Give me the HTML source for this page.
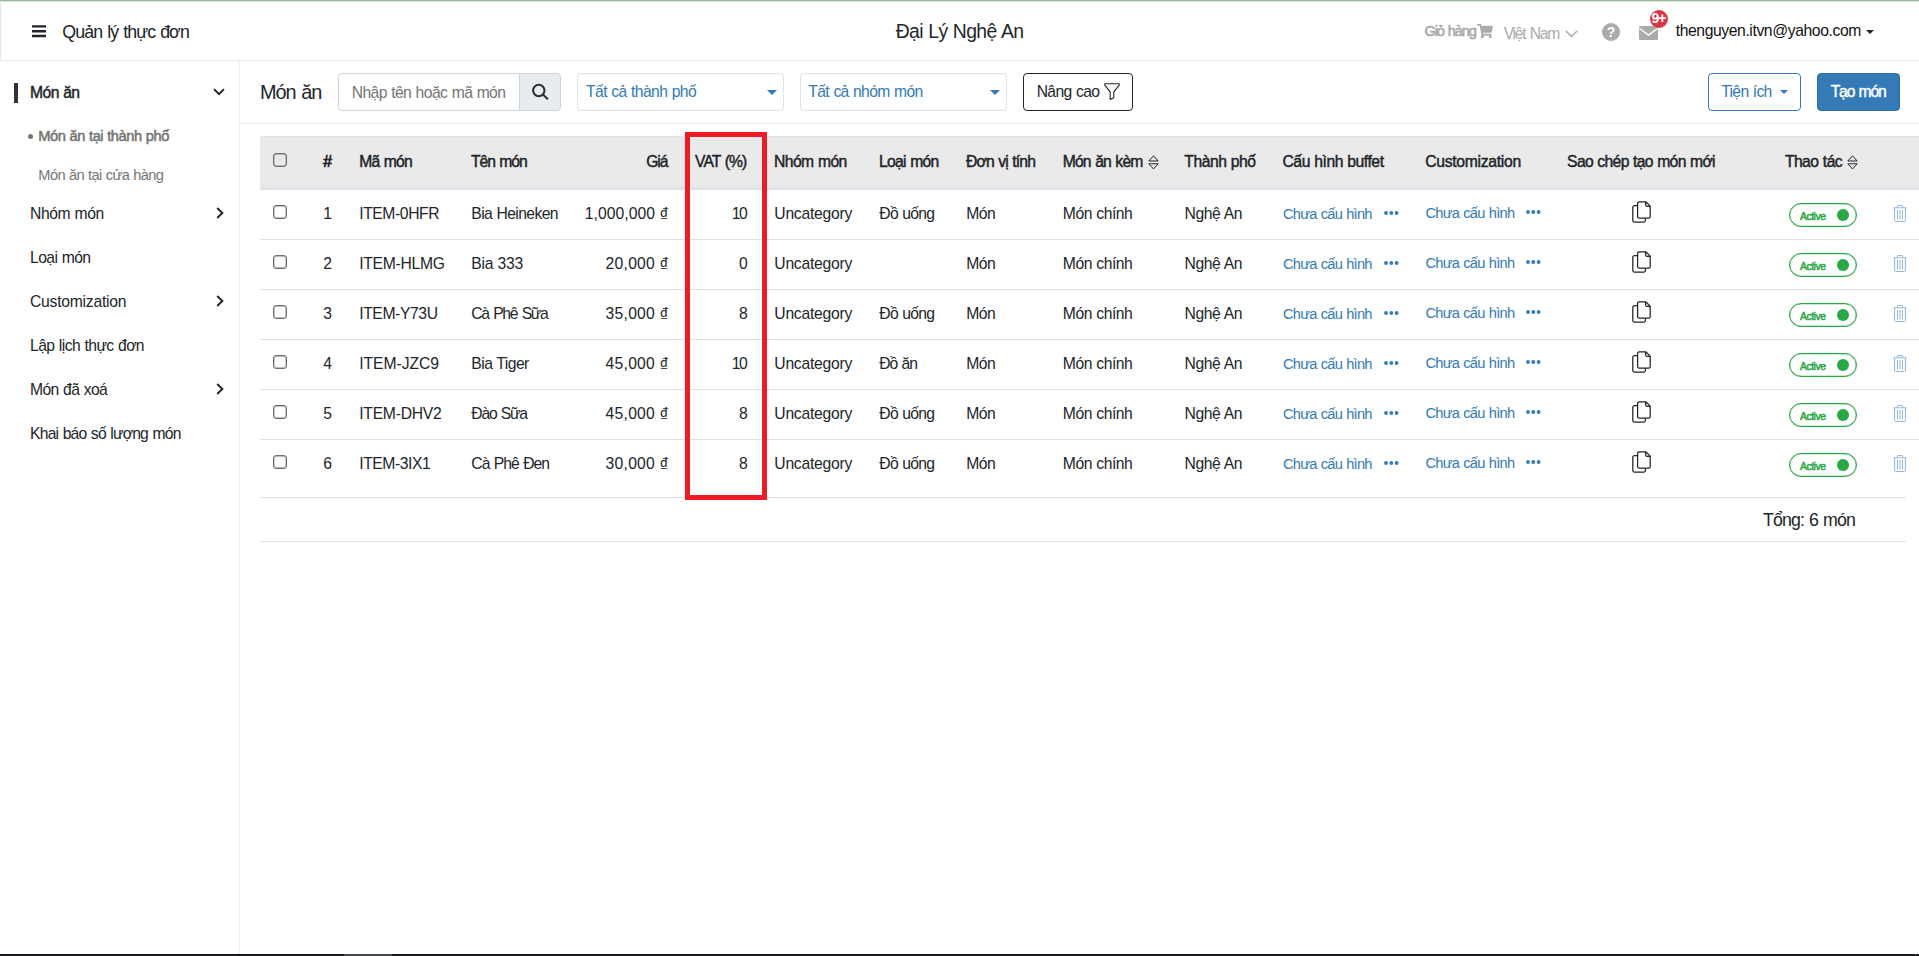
<!DOCTYPE html>
<html lang="vi">
<head>
<meta charset="utf-8">
<title>Quản lý thực đơn</title>
<style>
*{box-sizing:border-box;margin:0;padding:0}
html,body{width:1919px;height:956px;overflow:hidden;background:#fff}
body{font-family:"Liberation Sans",sans-serif;color:#212529;font-size:15px;position:relative}
.abs{position:absolute;white-space:nowrap}
.t{position:absolute;white-space:nowrap;line-height:1}
#topline{left:0;top:0;width:1919px;height:1px;background:#9db49c}
#topline2{left:0;top:1px;width:1919px;height:1px;background:#e4eae3}
#header{left:0;top:2px;width:1919px;height:59px;border-left:1px solid #e6e6e6;border-bottom:1px solid #e9e9e9;background:#fff}
#sidebar{left:0;top:61px;width:240px;height:893px;border-right:1px solid #ececec;background:#fff}
#toolbar{left:240px;top:61px;width:1679px;height:63px;border-bottom:1px solid #ececec}
#bottombar{left:0;top:954px;width:1919px;height:2px;background:#14181d}
#bottomthumb{left:344px;top:954px;width:48px;height:2px;background:#44484c}
.cb{position:absolute;left:273px;width:14px;height:14px;border:1px solid #6f6f6f;border-radius:3px;background:#fff;box-shadow:inset 0 0 0 0.4px #767676}
.rl{position:absolute;left:260px;width:1659px;height:1px;background:#dee2e6}
.pill{position:absolute;left:1789px;width:68px;height:24px;border:1px solid #28a745;border-radius:12px;background:#fff;box-shadow:inset 0 0 0 0.3px #28a745}
.dot{position:absolute;left:1837px;width:12px;height:12px;border-radius:50%;background:#28a745}
.ico{position:absolute;overflow:visible}
.d{font-family:"Noto Sans CJK SC","Liberation Sans",sans-serif;line-height:0}
</style>
</head>
<body>
<div class="abs" id="topline"></div><div class="abs" id="topline2"></div>
<div class="abs" id="header"></div><div class="abs" id="sidebar"></div><div class="abs" id="toolbar"></div>
<!-- header -->
<svg class="ico" style="left:32px;top:25px" width="14" height="13" viewBox="0 0 14 13"><path d="M0 1.4h14M0 6.2h14M0 11h14" stroke="#212529" stroke-width="2.4" fill="none"/></svg>
<div class="t" id="h_title" style="left:62.30px;top:24.00px;font-size:17.79px;color:#212529;letter-spacing:-0.895px;word-spacing:0.895px;">Quản lý thực đơn</div>
<div class="t" id="h_center" style="left:895.70px;top:22.01px;font-size:19.36px;color:#212529;letter-spacing:-0.623px;word-spacing:0.623px;">Đại Lý Nghệ An</div>
<div class="t" id="h_cart" style="left:1424.60px;top:24.00px;font-size:14.65px;color:#aaaaaa;-webkit-text-stroke:0.6px #aaaaaa;letter-spacing:-1.204px;word-spacing:1.204px;">Giỏ hàng</div>
<div class="t" id="h_vn" style="left:1503.70px;top:26.01px;font-size:15.7px;color:#aaaaaa;letter-spacing:-1.272px;word-spacing:1.272px;">Việt Nam</div>
<div class="t" id="h_email" style="left:1675.70px;top:23.01px;font-size:15.7px;color:#111;letter-spacing:-0.396px;">thenguyen.itvn@yahoo.com</div>
<svg class="ico" style="left:1477px;top:24px" width="16" height="14" viewBox="0 0 576 512"><path fill="#aaa" d="M528.12 301.319l47.273-208C578.806 78.301 567.391 64 551.99 64H159.208l-9.166-44.81C147.758 8.021 137.93 0 126.529 0H24C10.745 0 0 10.745 0 24v16c0 13.255 10.745 24 24 24h69.883l70.248 343.435C147.325 417.1 136 435.222 136 456c0 30.928 25.072 56 56 56s56-25.072 56-56c0-15.674-6.447-29.835-16.824-40h209.647C430.447 426.165 424 440.326 424 456c0 30.928 25.072 56 56 56s56-25.072 56-56c0-22.172-12.888-41.332-31.579-50.405l5.517-24.276c3.413-15.018-8.002-29.319-23.403-29.319H218.117l-6.545-32h293.145c11.206 0 20.92-7.754 23.403-18.681z"/></svg>
<svg class="ico" style="left:1565px;top:30px" width="13" height="8" viewBox="0 0 13 8"><path d="M0.7 0.8L6.5 6.6L12.3 0.8" stroke="#aaa" stroke-width="1.4" fill="none"/></svg>
<div class="abs" style="left:1602px;top:23px;width:18px;height:18px;border-radius:9px;background:#aaa;color:#fff;font-size:14px;font-weight:bold;text-align:center;line-height:18px">?</div>
<svg class="ico" style="left:1639px;top:25.5px" width="19" height="14" viewBox="0 0 19 14"><rect x="0" y="0" width="19" height="14" rx="1.5" fill="#aaa"/><path d="M0.5 2.5L9.5 9L18.5 2.5" stroke="#fff" stroke-width="1.5" fill="none"/></svg>
<div class="abs" style="left:1650px;top:10px;width:18px;height:18px;border-radius:9px;background:#dc3545;color:#fff;font-size:14px;font-weight:bold;text-align:center;line-height:17px;letter-spacing:-1px;text-indent:-1px">9+</div>
<svg class="ico" style="left:1866px;top:29.5px" width="8" height="4" viewBox="0 0 8 4"><path d="M0 0h8L4 4z" fill="#212529"/></svg>
<!-- sidebar -->
<div class="abs" style="left:14px;top:83px;width:4px;height:20px;background:#333"></div>
<svg class="ico" style="left:213px;top:88px" width="12" height="8" viewBox="0 0 12 8" fill="none" stroke="#212529" stroke-width="1.9"><path d="M1 1.2L6 6.2L11 1.2"/></svg>
<div class="abs" style="left:28px;top:133.6px;width:5px;height:5px;border-radius:50%;background:#777"></div>
<div class="t" id="s_mon" style="left:30.00px;top:85.00px;font-size:15.7px;color:#212529;-webkit-text-stroke:0.45px #212529;letter-spacing:-0.582px;word-spacing:0.582px;">Món ăn</div>
<div class="t" id="s_sub1" style="left:38.30px;top:129.00px;font-size:14.65px;color:#737373;-webkit-text-stroke:0.5px #737373;letter-spacing:-0.439px;word-spacing:0.439px;">Món ăn tại thành phố</div>
<div class="t" id="s_sub2" style="left:38.30px;top:168.00px;font-size:14.65px;color:#777;letter-spacing:-0.617px;word-spacing:0.617px;">Món ăn tại cửa hàng</div>
<div class="t" id="s_i0" style="left:30.00px;top:206.01px;font-size:15.7px;color:#212529;letter-spacing:-0.406px;word-spacing:0.406px;">Nhóm món</div>
<div class="t" id="s_i1" style="left:30.00px;top:250.01px;font-size:15.7px;color:#212529;letter-spacing:-0.591px;word-spacing:0.591px;">Loại món</div>
<div class="t" id="s_i2" style="left:30.00px;top:294.01px;font-size:15.7px;color:#212529;letter-spacing:-0.242px;">Customization</div>
<div class="t" id="s_i3" style="left:30.00px;top:338.01px;font-size:15.7px;color:#212529;letter-spacing:-0.567px;word-spacing:0.567px;">Lập lịch thực đơn</div>
<div class="t" id="s_i4" style="left:30.00px;top:382.01px;font-size:15.7px;color:#212529;letter-spacing:-0.598px;word-spacing:0.598px;">Món đã xoá</div>
<div class="t" id="s_i5" style="left:30.00px;top:426.01px;font-size:15.7px;color:#212529;letter-spacing:-0.777px;word-spacing:0.777px;">Khai báo số lượng món</div>
<svg class="ico" style="left:216px;top:206.6px" width="8" height="12" viewBox="0 0 8 12" fill="none" stroke="#212529" stroke-width="1.9"><path d="M1.2 1L6.4 6L1.2 11"/></svg>
<svg class="ico" style="left:216px;top:294.6px" width="8" height="12" viewBox="0 0 8 12" fill="none" stroke="#212529" stroke-width="1.9"><path d="M1.2 1L6.4 6L1.2 11"/></svg>
<svg class="ico" style="left:216px;top:382.6px" width="8" height="12" viewBox="0 0 8 12" fill="none" stroke="#212529" stroke-width="1.9"><path d="M1.2 1L6.4 6L1.2 11"/></svg>
<!-- toolbar -->
<div class="abs" style="left:338px;top:73px;width:182px;height:38px;border:1px solid #ced4da;border-radius:4px 0 0 4px;background:#fff"></div>
<div class="abs" style="left:519px;top:73px;width:42px;height:38px;border:1px solid #ced4da;border-radius:0 4px 4px 0;background:#e9ecef"></div>
<svg class="ico" style="left:531px;top:83px" width="19" height="18" viewBox="0 0 19 18" fill="none" stroke="#2b3035" stroke-width="2.1"><circle cx="7.8" cy="7.5" r="5.7"/><path d="M11.9 11.6L16.9 16.2"/></svg>
<div class="abs" style="left:577px;top:73px;width:206.5px;height:38px;border:1px solid #dfe3e7;border-radius:4px;background:#fff"></div>
<div class="abs" style="left:800px;top:73px;width:206.5px;height:38px;border:1px solid #dfe3e7;border-radius:4px;background:#fff"></div>
<svg class="ico" style="left:767px;top:90px" width="10" height="5" viewBox="0 0 10 5"><path d="M0 0h10L5 5z" fill="#337ab7"/></svg>
<svg class="ico" style="left:990px;top:90px" width="10" height="5" viewBox="0 0 10 5"><path d="M0 0h10L5 5z" fill="#337ab7"/></svg>
<div class="abs" style="left:1023px;top:73px;width:110px;height:38px;border:1px solid #212529;border-radius:4px;background:#fff"></div>
<svg class="ico" style="left:1104px;top:83px" width="16" height="17" viewBox="0 0 16 17" fill="none" stroke="#212529" stroke-width="1.1" stroke-linejoin="round"><path d="M0.8 0.8h14.4v1.4l-5.4 6.6v6l-3.6 1.6v-7.6l-5.4-6.6z"/></svg>
<div class="abs" style="left:1708px;top:73px;width:93px;height:38px;border:1px solid #337ab7;border-radius:4px;background:#fff"></div>
<svg class="ico" style="left:1780px;top:89.5px" width="8" height="4" viewBox="0 0 8 4"><path d="M0 0h8L4 4z" fill="#337ab7"/></svg>
<div class="abs" style="left:1817px;top:73px;width:83px;height:38px;border:1px solid #2e6da4;border-radius:4px;background:#337ab7"></div>
<div class="t" id="t_title" style="left:260.00px;top:83.01px;font-size:19.89px;color:#212529;letter-spacing:-0.999px;word-spacing:0.999px;">Món ăn</div>
<div class="t" id="t_ph" style="left:351.70px;top:85.01px;font-size:15.7px;color:#757575;letter-spacing:-0.585px;word-spacing:0.585px;">Nhập tên hoặc mã món</div>
<div class="t" id="t_sel1" style="left:586.00px;top:84.01px;font-size:15.7px;color:#337ab7;letter-spacing:-0.587px;word-spacing:0.587px;">Tất cả thành phố</div>
<div class="t" id="t_sel2" style="left:808.30px;top:84.01px;font-size:15.7px;color:#337ab7;letter-spacing:-0.643px;word-spacing:0.643px;">Tất cả nhóm món</div>
<div class="t" id="t_adv" style="left:1036.70px;top:84.01px;font-size:15.7px;color:#212529;letter-spacing:-0.643px;word-spacing:0.643px;">Nâng cao</div>
<div class="t" id="t_util" style="left:1721.30px;top:84.01px;font-size:15.7px;color:#337ab7;letter-spacing:-0.706px;word-spacing:0.706px;">Tiện ích</div>
<div class="t" id="t_new" style="left:1830.70px;top:84.01px;font-size:15.7px;color:#fff;-webkit-text-stroke:0.4px #fff;letter-spacing:-1.184px;word-spacing:1.184px;">Tạo món</div>
<!-- table -->
<div class="abs" style="left:260px;top:136px;width:1659px;height:54px;background:#eaeaea;border-top:1px solid #dee2e6;border-bottom:3px solid #dee2e6"></div>
<div class="cb" style="top:153px;background:transparent"></div>
<div class="t" id="th0" style="left:323.20px;top:154.01px;font-size:15.7px;color:#212529;-webkit-text-stroke:0.7px #212529;">#</div>
<div class="t" id="th1" style="left:359.30px;top:154.01px;font-size:15.7px;color:#212529;-webkit-text-stroke:0.45px #212529;letter-spacing:-0.818px;word-spacing:0.818px;">Mã món</div>
<div class="t" id="th2" style="left:471.00px;top:154.01px;font-size:15.7px;color:#212529;-webkit-text-stroke:0.45px #212529;letter-spacing:-1.044px;word-spacing:1.044px;">Tên món</div>
<div class="t" id="th3" style="right:1250.50px;top:154.01px;font-size:15.7px;color:#212529;-webkit-text-stroke:0.45px #212529;letter-spacing:-1.061px;margin-right:1.061px;">Giá</div>
<div class="t" id="th4" style="left:695.00px;top:154.01px;font-size:15.7px;color:#212529;-webkit-text-stroke:0.45px #212529;letter-spacing:-0.871px;word-spacing:0.871px;">VAT (%)</div>
<div class="t" id="th5" style="left:774.00px;top:154.01px;font-size:15.7px;color:#212529;-webkit-text-stroke:0.45px #212529;letter-spacing:-0.572px;word-spacing:0.572px;">Nhóm món</div>
<div class="t" id="th6" style="left:879.00px;top:154.01px;font-size:15.7px;color:#212529;-webkit-text-stroke:0.45px #212529;letter-spacing:-0.708px;word-spacing:0.708px;">Loại món</div>
<div class="t" id="th7" style="left:966.00px;top:154.01px;font-size:15.7px;color:#212529;-webkit-text-stroke:0.45px #212529;letter-spacing:-0.820px;word-spacing:0.820px;">Đơn vị tính</div>
<div class="t" id="th8" style="left:1062.70px;top:154.01px;font-size:15.7px;color:#212529;-webkit-text-stroke:0.45px #212529;letter-spacing:-0.804px;word-spacing:0.804px;">Món ăn kèm</div>
<div class="t" id="th9" style="left:1184.30px;top:154.01px;font-size:15.7px;color:#212529;-webkit-text-stroke:0.45px #212529;letter-spacing:-0.474px;word-spacing:0.474px;">Thành phố</div>
<div class="t" id="th10" style="left:1282.50px;top:154.01px;font-size:15.7px;color:#212529;-webkit-text-stroke:0.45px #212529;letter-spacing:-0.458px;word-spacing:0.458px;">Cấu hình buffet</div>
<div class="t" id="th11" style="left:1425.20px;top:154.01px;font-size:15.7px;color:#212529;-webkit-text-stroke:0.45px #212529;letter-spacing:-0.284px;">Customization</div>
<div class="t" id="th12" style="left:1567.10px;top:154.01px;font-size:15.7px;color:#212529;-webkit-text-stroke:0.45px #212529;letter-spacing:-0.669px;word-spacing:0.669px;">Sao chép tạo món mới</div>
<div class="t" id="th13" style="left:1784.90px;top:154.01px;font-size:15.7px;color:#212529;-webkit-text-stroke:0.45px #212529;letter-spacing:-0.541px;word-spacing:0.541px;">Thao tác</div>
<svg class="ico" style="left:1148px;top:154.6px" width="11" height="15" viewBox="0 0 11 15" fill="none" stroke="#212529" stroke-width="1" stroke-linejoin="round"><path d="M0.8 6L5.5 0.8L10.2 6z"/><path d="M0.8 8.8L5.5 14L10.2 8.8z"/></svg>
<svg class="ico" style="left:1847px;top:154.6px" width="11" height="15" viewBox="0 0 11 15" fill="none" stroke="#212529" stroke-width="1" stroke-linejoin="round"><path d="M0.8 6L5.5 0.8L10.2 6z"/><path d="M0.8 8.8L5.5 14L10.2 8.8z"/></svg>
<div class="cb" style="top:205px"></div>
<div class="pill" style="top:203px"></div><div class="dot" style="top:208.7px"></div>
<div class="t" id="r0n" style="left:323.20px;top:206.00px;font-size:15.7px;color:#212529;">1</div>
<div class="t" id="r0c" style="left:359.20px;top:206.00px;font-size:15.7px;color:#212529;letter-spacing:-0.409px;">ITEM-0HFR</div>
<div class="t" id="r0m" style="left:471.30px;top:206.00px;font-size:15.7px;color:#212529;letter-spacing:-0.613px;word-spacing:0.613px;">Bia Heineken</div>
<div class="t" id="r0p" style="right:1250.80px;top:206.00px;font-size:15.7px;color:#212529;letter-spacing:0.069px;word-spacing:-0.069px;margin-right:-0.069px;">1,000,000 <span class="d">₫</span></div>
<div class="t" id="r0v" style="right:1171.20px;top:206.00px;font-size:15.7px;color:#212529;letter-spacing:-1.453px;margin-right:1.453px;">10</div>
<div class="t" id="r0g" style="left:774.30px;top:206.00px;font-size:15.7px;color:#212529;letter-spacing:-0.248px;">Uncategory</div>
<div class="t" id="r0l" style="left:879.30px;top:206.00px;font-size:15.7px;color:#212529;letter-spacing:-0.703px;word-spacing:0.703px;">Đồ uống</div>
<div class="t" id="r0u" style="left:966.20px;top:206.00px;font-size:15.7px;color:#212529;letter-spacing:-0.516px;">Món</div>
<div class="t" id="r0k" style="left:1062.80px;top:206.00px;font-size:15.7px;color:#212529;letter-spacing:-0.467px;word-spacing:0.467px;">Món chính</div>
<div class="t" id="r0t" style="left:1184.60px;top:206.00px;font-size:15.7px;color:#212529;letter-spacing:-0.438px;word-spacing:0.438px;">Nghệ An</div>
<div class="t" id="r0b" style="left:1283.00px;top:207.01px;font-size:14.65px;color:#337ab7;letter-spacing:-0.741px;word-spacing:0.741px;">Chưa cấu hình</div>
<div class="t" id="r0z" style="left:1425.40px;top:206.00px;font-size:14.65px;color:#337ab7;letter-spacing:-0.721px;word-spacing:0.721px;">Chưa cấu hình</div>
<div class="t" id="r0a" style="left:1800.00px;top:212.01px;font-size:10.47px;color:#28a745;-webkit-text-stroke:0.5px #28a745;letter-spacing:-0.503px;">Active</div>
<svg class="ico" style="left:1384.2px;top:211.3px" width="15" height="4" viewBox="0 0 15 4"><circle cx="2" cy="2" r="1.9" fill="#337ab7"/><circle cx="7.3" cy="2" r="1.9" fill="#337ab7"/><circle cx="12.6" cy="2" r="1.9" fill="#337ab7"/></svg>
<svg class="ico" style="left:1526.4px;top:210.4px" width="15" height="4" viewBox="0 0 15 4"><circle cx="2" cy="2" r="1.9" fill="#337ab7"/><circle cx="7.3" cy="2" r="1.9" fill="#337ab7"/><circle cx="12.6" cy="2" r="1.9" fill="#337ab7"/></svg>
<svg class="ico" style="left:1632px;top:201.3px" width="19" height="22" viewBox="0 0 19 22" fill="none" stroke="#212529" stroke-width="1.25" stroke-linejoin="round"><path d="M7.2 0.8h6.6l4.4 4.4v10.3a1.6 1.6 0 0 1-1.6 1.6h-9.4a1.6 1.6 0 0 1-1.6-1.6v-13.1a1.6 1.6 0 0 1 1.6-1.6z"/><path d="M13.6 0.9v3.2a1.2 1.2 0 0 0 1.2 1.2h3.2"/><path d="M5.5 4.6h-3.1a1.6 1.6 0 0 0-1.6 1.6v13.3a1.6 1.6 0 0 0 1.6 1.6h9.4a1.6 1.6 0 0 0 1.6-1.6v-2.3"/></svg>
<svg class="ico" style="left:1893px;top:205px" width="14" height="17" viewBox="0 0 14 17" fill="none" stroke="#8fb6dc" stroke-width="1"><path d="M0.3 2.8h13.4"/><path d="M4.3 2.6v-1.3a0.8 0.8 0 0 1 0.8-0.8h3.8a0.8 0.8 0 0 1 0.8 0.8v1.3"/><path d="M1.6 3v12.6a0.9 0.9 0 0 0 0.9 0.9h9a0.9 0.9 0 0 0 0.9-0.9v-12.6"/><path d="M4.5 5v9.4M7 5v9.4M9.5 5v9.4"/></svg>
<div class="rl" style="top:239px"></div>
<div class="cb" style="top:255px"></div>
<div class="pill" style="top:253px"></div><div class="dot" style="top:258.7px"></div>
<div class="t" id="r1n" style="left:323.20px;top:256.00px;font-size:15.7px;color:#212529;">2</div>
<div class="t" id="r1c" style="left:359.20px;top:256.00px;font-size:15.7px;color:#212529;letter-spacing:-0.279px;">ITEM-HLMG</div>
<div class="t" id="r1m" style="left:471.30px;top:256.00px;font-size:15.7px;color:#212529;letter-spacing:-0.244px;word-spacing:0.244px;">Bia 333</div>
<div class="t" id="r1p" style="right:1250.80px;top:256.00px;font-size:15.7px;color:#212529;letter-spacing:0.273px;word-spacing:-0.273px;margin-right:-0.273px;">20,000 <span class="d">₫</span></div>
<div class="t" id="r1v" style="right:1171.20px;top:256.00px;font-size:15.7px;color:#212529;">0</div>
<div class="t" id="r1g" style="left:774.30px;top:256.00px;font-size:15.7px;color:#212529;letter-spacing:-0.248px;">Uncategory</div>
<div class="t" id="r1u" style="left:966.20px;top:256.00px;font-size:15.7px;color:#212529;letter-spacing:-0.516px;">Món</div>
<div class="t" id="r1k" style="left:1062.80px;top:256.00px;font-size:15.7px;color:#212529;letter-spacing:-0.467px;word-spacing:0.467px;">Món chính</div>
<div class="t" id="r1t" style="left:1184.60px;top:256.00px;font-size:15.7px;color:#212529;letter-spacing:-0.438px;word-spacing:0.438px;">Nghệ An</div>
<div class="t" id="r1b" style="left:1283.00px;top:257.01px;font-size:14.65px;color:#337ab7;letter-spacing:-0.741px;word-spacing:0.741px;">Chưa cấu hình</div>
<div class="t" id="r1z" style="left:1425.40px;top:256.00px;font-size:14.65px;color:#337ab7;letter-spacing:-0.721px;word-spacing:0.721px;">Chưa cấu hình</div>
<div class="t" id="r1a" style="left:1800.00px;top:262.01px;font-size:10.47px;color:#28a745;-webkit-text-stroke:0.5px #28a745;letter-spacing:-0.503px;">Active</div>
<svg class="ico" style="left:1384.2px;top:261.3px" width="15" height="4" viewBox="0 0 15 4"><circle cx="2" cy="2" r="1.9" fill="#337ab7"/><circle cx="7.3" cy="2" r="1.9" fill="#337ab7"/><circle cx="12.6" cy="2" r="1.9" fill="#337ab7"/></svg>
<svg class="ico" style="left:1526.4px;top:260.4px" width="15" height="4" viewBox="0 0 15 4"><circle cx="2" cy="2" r="1.9" fill="#337ab7"/><circle cx="7.3" cy="2" r="1.9" fill="#337ab7"/><circle cx="12.6" cy="2" r="1.9" fill="#337ab7"/></svg>
<svg class="ico" style="left:1632px;top:251.3px" width="19" height="22" viewBox="0 0 19 22" fill="none" stroke="#212529" stroke-width="1.25" stroke-linejoin="round"><path d="M7.2 0.8h6.6l4.4 4.4v10.3a1.6 1.6 0 0 1-1.6 1.6h-9.4a1.6 1.6 0 0 1-1.6-1.6v-13.1a1.6 1.6 0 0 1 1.6-1.6z"/><path d="M13.6 0.9v3.2a1.2 1.2 0 0 0 1.2 1.2h3.2"/><path d="M5.5 4.6h-3.1a1.6 1.6 0 0 0-1.6 1.6v13.3a1.6 1.6 0 0 0 1.6 1.6h9.4a1.6 1.6 0 0 0 1.6-1.6v-2.3"/></svg>
<svg class="ico" style="left:1893px;top:255px" width="14" height="17" viewBox="0 0 14 17" fill="none" stroke="#8fb6dc" stroke-width="1"><path d="M0.3 2.8h13.4"/><path d="M4.3 2.6v-1.3a0.8 0.8 0 0 1 0.8-0.8h3.8a0.8 0.8 0 0 1 0.8 0.8v1.3"/><path d="M1.6 3v12.6a0.9 0.9 0 0 0 0.9 0.9h9a0.9 0.9 0 0 0 0.9-0.9v-12.6"/><path d="M4.5 5v9.4M7 5v9.4M9.5 5v9.4"/></svg>
<div class="rl" style="top:289px"></div>
<div class="cb" style="top:305px"></div>
<div class="pill" style="top:303px"></div><div class="dot" style="top:308.7px"></div>
<div class="t" id="r2n" style="left:323.20px;top:306.00px;font-size:15.7px;color:#212529;">3</div>
<div class="t" id="r2c" style="left:359.20px;top:306.00px;font-size:15.7px;color:#212529;letter-spacing:-0.394px;">ITEM-Y73U</div>
<div class="t" id="r2m" style="left:471.30px;top:306.00px;font-size:15.7px;color:#212529;letter-spacing:-1.268px;word-spacing:1.268px;">Cà Phê Sữa</div>
<div class="t" id="r2p" style="right:1250.80px;top:306.00px;font-size:15.7px;color:#212529;letter-spacing:0.273px;word-spacing:-0.273px;margin-right:-0.273px;">35,000 <span class="d">₫</span></div>
<div class="t" id="r2v" style="right:1171.20px;top:306.00px;font-size:15.7px;color:#212529;">8</div>
<div class="t" id="r2g" style="left:774.30px;top:306.00px;font-size:15.7px;color:#212529;letter-spacing:-0.248px;">Uncategory</div>
<div class="t" id="r2l" style="left:879.30px;top:306.00px;font-size:15.7px;color:#212529;letter-spacing:-0.703px;word-spacing:0.703px;">Đồ uống</div>
<div class="t" id="r2u" style="left:966.20px;top:306.00px;font-size:15.7px;color:#212529;letter-spacing:-0.516px;">Món</div>
<div class="t" id="r2k" style="left:1062.80px;top:306.00px;font-size:15.7px;color:#212529;letter-spacing:-0.467px;word-spacing:0.467px;">Món chính</div>
<div class="t" id="r2t" style="left:1184.60px;top:306.00px;font-size:15.7px;color:#212529;letter-spacing:-0.438px;word-spacing:0.438px;">Nghệ An</div>
<div class="t" id="r2b" style="left:1283.00px;top:307.01px;font-size:14.65px;color:#337ab7;letter-spacing:-0.741px;word-spacing:0.741px;">Chưa cấu hình</div>
<div class="t" id="r2z" style="left:1425.40px;top:306.00px;font-size:14.65px;color:#337ab7;letter-spacing:-0.721px;word-spacing:0.721px;">Chưa cấu hình</div>
<div class="t" id="r2a" style="left:1800.00px;top:312.01px;font-size:10.47px;color:#28a745;-webkit-text-stroke:0.5px #28a745;letter-spacing:-0.503px;">Active</div>
<svg class="ico" style="left:1384.2px;top:311.3px" width="15" height="4" viewBox="0 0 15 4"><circle cx="2" cy="2" r="1.9" fill="#337ab7"/><circle cx="7.3" cy="2" r="1.9" fill="#337ab7"/><circle cx="12.6" cy="2" r="1.9" fill="#337ab7"/></svg>
<svg class="ico" style="left:1526.4px;top:310.4px" width="15" height="4" viewBox="0 0 15 4"><circle cx="2" cy="2" r="1.9" fill="#337ab7"/><circle cx="7.3" cy="2" r="1.9" fill="#337ab7"/><circle cx="12.6" cy="2" r="1.9" fill="#337ab7"/></svg>
<svg class="ico" style="left:1632px;top:301.3px" width="19" height="22" viewBox="0 0 19 22" fill="none" stroke="#212529" stroke-width="1.25" stroke-linejoin="round"><path d="M7.2 0.8h6.6l4.4 4.4v10.3a1.6 1.6 0 0 1-1.6 1.6h-9.4a1.6 1.6 0 0 1-1.6-1.6v-13.1a1.6 1.6 0 0 1 1.6-1.6z"/><path d="M13.6 0.9v3.2a1.2 1.2 0 0 0 1.2 1.2h3.2"/><path d="M5.5 4.6h-3.1a1.6 1.6 0 0 0-1.6 1.6v13.3a1.6 1.6 0 0 0 1.6 1.6h9.4a1.6 1.6 0 0 0 1.6-1.6v-2.3"/></svg>
<svg class="ico" style="left:1893px;top:305px" width="14" height="17" viewBox="0 0 14 17" fill="none" stroke="#8fb6dc" stroke-width="1"><path d="M0.3 2.8h13.4"/><path d="M4.3 2.6v-1.3a0.8 0.8 0 0 1 0.8-0.8h3.8a0.8 0.8 0 0 1 0.8 0.8v1.3"/><path d="M1.6 3v12.6a0.9 0.9 0 0 0 0.9 0.9h9a0.9 0.9 0 0 0 0.9-0.9v-12.6"/><path d="M4.5 5v9.4M7 5v9.4M9.5 5v9.4"/></svg>
<div class="rl" style="top:339px"></div>
<div class="cb" style="top:355px"></div>
<div class="pill" style="top:353px"></div><div class="dot" style="top:358.7px"></div>
<div class="t" id="r3n" style="left:323.20px;top:356.00px;font-size:15.7px;color:#212529;">4</div>
<div class="t" id="r3c" style="left:359.20px;top:356.00px;font-size:15.7px;color:#212529;letter-spacing:-0.048px;">ITEM-JZC9</div>
<div class="t" id="r3m" style="left:471.30px;top:356.00px;font-size:15.7px;color:#212529;letter-spacing:-0.560px;word-spacing:0.560px;">Bia Tiger</div>
<div class="t" id="r3p" style="right:1250.80px;top:356.00px;font-size:15.7px;color:#212529;letter-spacing:0.273px;word-spacing:-0.273px;margin-right:-0.273px;">45,000 <span class="d">₫</span></div>
<div class="t" id="r3v" style="right:1171.20px;top:356.00px;font-size:15.7px;color:#212529;letter-spacing:-1.453px;margin-right:1.453px;">10</div>
<div class="t" id="r3g" style="left:774.30px;top:356.00px;font-size:15.7px;color:#212529;letter-spacing:-0.248px;">Uncategory</div>
<div class="t" id="r3l" style="left:879.30px;top:356.00px;font-size:15.7px;color:#212529;letter-spacing:-1.092px;word-spacing:1.092px;">Đồ ăn</div>
<div class="t" id="r3u" style="left:966.20px;top:356.00px;font-size:15.7px;color:#212529;letter-spacing:-0.516px;">Món</div>
<div class="t" id="r3k" style="left:1062.80px;top:356.00px;font-size:15.7px;color:#212529;letter-spacing:-0.467px;word-spacing:0.467px;">Món chính</div>
<div class="t" id="r3t" style="left:1184.60px;top:356.00px;font-size:15.7px;color:#212529;letter-spacing:-0.438px;word-spacing:0.438px;">Nghệ An</div>
<div class="t" id="r3b" style="left:1283.00px;top:357.01px;font-size:14.65px;color:#337ab7;letter-spacing:-0.741px;word-spacing:0.741px;">Chưa cấu hình</div>
<div class="t" id="r3z" style="left:1425.40px;top:356.00px;font-size:14.65px;color:#337ab7;letter-spacing:-0.721px;word-spacing:0.721px;">Chưa cấu hình</div>
<div class="t" id="r3a" style="left:1800.00px;top:362.01px;font-size:10.47px;color:#28a745;-webkit-text-stroke:0.5px #28a745;letter-spacing:-0.503px;">Active</div>
<svg class="ico" style="left:1384.2px;top:361.3px" width="15" height="4" viewBox="0 0 15 4"><circle cx="2" cy="2" r="1.9" fill="#337ab7"/><circle cx="7.3" cy="2" r="1.9" fill="#337ab7"/><circle cx="12.6" cy="2" r="1.9" fill="#337ab7"/></svg>
<svg class="ico" style="left:1526.4px;top:360.4px" width="15" height="4" viewBox="0 0 15 4"><circle cx="2" cy="2" r="1.9" fill="#337ab7"/><circle cx="7.3" cy="2" r="1.9" fill="#337ab7"/><circle cx="12.6" cy="2" r="1.9" fill="#337ab7"/></svg>
<svg class="ico" style="left:1632px;top:351.3px" width="19" height="22" viewBox="0 0 19 22" fill="none" stroke="#212529" stroke-width="1.25" stroke-linejoin="round"><path d="M7.2 0.8h6.6l4.4 4.4v10.3a1.6 1.6 0 0 1-1.6 1.6h-9.4a1.6 1.6 0 0 1-1.6-1.6v-13.1a1.6 1.6 0 0 1 1.6-1.6z"/><path d="M13.6 0.9v3.2a1.2 1.2 0 0 0 1.2 1.2h3.2"/><path d="M5.5 4.6h-3.1a1.6 1.6 0 0 0-1.6 1.6v13.3a1.6 1.6 0 0 0 1.6 1.6h9.4a1.6 1.6 0 0 0 1.6-1.6v-2.3"/></svg>
<svg class="ico" style="left:1893px;top:355px" width="14" height="17" viewBox="0 0 14 17" fill="none" stroke="#8fb6dc" stroke-width="1"><path d="M0.3 2.8h13.4"/><path d="M4.3 2.6v-1.3a0.8 0.8 0 0 1 0.8-0.8h3.8a0.8 0.8 0 0 1 0.8 0.8v1.3"/><path d="M1.6 3v12.6a0.9 0.9 0 0 0 0.9 0.9h9a0.9 0.9 0 0 0 0.9-0.9v-12.6"/><path d="M4.5 5v9.4M7 5v9.4M9.5 5v9.4"/></svg>
<div class="rl" style="top:389px"></div>
<div class="cb" style="top:405px"></div>
<div class="pill" style="top:403px"></div><div class="dot" style="top:408.7px"></div>
<div class="t" id="r4n" style="left:323.20px;top:406.00px;font-size:15.7px;color:#212529;">5</div>
<div class="t" id="r4c" style="left:359.20px;top:406.00px;font-size:15.7px;color:#212529;letter-spacing:-0.243px;">ITEM-DHV2</div>
<div class="t" id="r4m" style="left:471.30px;top:406.00px;font-size:15.7px;color:#212529;letter-spacing:-1.226px;word-spacing:1.226px;">Đào Sữa</div>
<div class="t" id="r4p" style="right:1250.80px;top:406.00px;font-size:15.7px;color:#212529;letter-spacing:0.273px;word-spacing:-0.273px;margin-right:-0.273px;">45,000 <span class="d">₫</span></div>
<div class="t" id="r4v" style="right:1171.20px;top:406.00px;font-size:15.7px;color:#212529;">8</div>
<div class="t" id="r4g" style="left:774.30px;top:406.00px;font-size:15.7px;color:#212529;letter-spacing:-0.248px;">Uncategory</div>
<div class="t" id="r4l" style="left:879.30px;top:406.00px;font-size:15.7px;color:#212529;letter-spacing:-0.703px;word-spacing:0.703px;">Đồ uống</div>
<div class="t" id="r4u" style="left:966.20px;top:406.00px;font-size:15.7px;color:#212529;letter-spacing:-0.516px;">Món</div>
<div class="t" id="r4k" style="left:1062.80px;top:406.00px;font-size:15.7px;color:#212529;letter-spacing:-0.467px;word-spacing:0.467px;">Món chính</div>
<div class="t" id="r4t" style="left:1184.60px;top:406.00px;font-size:15.7px;color:#212529;letter-spacing:-0.438px;word-spacing:0.438px;">Nghệ An</div>
<div class="t" id="r4b" style="left:1283.00px;top:407.01px;font-size:14.65px;color:#337ab7;letter-spacing:-0.741px;word-spacing:0.741px;">Chưa cấu hình</div>
<div class="t" id="r4z" style="left:1425.40px;top:406.00px;font-size:14.65px;color:#337ab7;letter-spacing:-0.721px;word-spacing:0.721px;">Chưa cấu hình</div>
<div class="t" id="r4a" style="left:1800.00px;top:412.01px;font-size:10.47px;color:#28a745;-webkit-text-stroke:0.5px #28a745;letter-spacing:-0.503px;">Active</div>
<svg class="ico" style="left:1384.2px;top:411.3px" width="15" height="4" viewBox="0 0 15 4"><circle cx="2" cy="2" r="1.9" fill="#337ab7"/><circle cx="7.3" cy="2" r="1.9" fill="#337ab7"/><circle cx="12.6" cy="2" r="1.9" fill="#337ab7"/></svg>
<svg class="ico" style="left:1526.4px;top:410.4px" width="15" height="4" viewBox="0 0 15 4"><circle cx="2" cy="2" r="1.9" fill="#337ab7"/><circle cx="7.3" cy="2" r="1.9" fill="#337ab7"/><circle cx="12.6" cy="2" r="1.9" fill="#337ab7"/></svg>
<svg class="ico" style="left:1632px;top:401.3px" width="19" height="22" viewBox="0 0 19 22" fill="none" stroke="#212529" stroke-width="1.25" stroke-linejoin="round"><path d="M7.2 0.8h6.6l4.4 4.4v10.3a1.6 1.6 0 0 1-1.6 1.6h-9.4a1.6 1.6 0 0 1-1.6-1.6v-13.1a1.6 1.6 0 0 1 1.6-1.6z"/><path d="M13.6 0.9v3.2a1.2 1.2 0 0 0 1.2 1.2h3.2"/><path d="M5.5 4.6h-3.1a1.6 1.6 0 0 0-1.6 1.6v13.3a1.6 1.6 0 0 0 1.6 1.6h9.4a1.6 1.6 0 0 0 1.6-1.6v-2.3"/></svg>
<svg class="ico" style="left:1893px;top:405px" width="14" height="17" viewBox="0 0 14 17" fill="none" stroke="#8fb6dc" stroke-width="1"><path d="M0.3 2.8h13.4"/><path d="M4.3 2.6v-1.3a0.8 0.8 0 0 1 0.8-0.8h3.8a0.8 0.8 0 0 1 0.8 0.8v1.3"/><path d="M1.6 3v12.6a0.9 0.9 0 0 0 0.9 0.9h9a0.9 0.9 0 0 0 0.9-0.9v-12.6"/><path d="M4.5 5v9.4M7 5v9.4M9.5 5v9.4"/></svg>
<div class="rl" style="top:439px"></div>
<div class="cb" style="top:455px"></div>
<div class="pill" style="top:453px"></div><div class="dot" style="top:458.7px"></div>
<div class="t" id="r5n" style="left:323.20px;top:456.00px;font-size:15.7px;color:#212529;">6</div>
<div class="t" id="r5c" style="left:359.20px;top:456.00px;font-size:15.7px;color:#212529;letter-spacing:-0.421px;">ITEM-3IX1</div>
<div class="t" id="r5m" style="left:471.30px;top:456.00px;font-size:15.7px;color:#212529;letter-spacing:-0.967px;word-spacing:0.967px;">Cà Phê Đen</div>
<div class="t" id="r5p" style="right:1250.80px;top:456.00px;font-size:15.7px;color:#212529;letter-spacing:0.273px;word-spacing:-0.273px;margin-right:-0.273px;">30,000 <span class="d">₫</span></div>
<div class="t" id="r5v" style="right:1171.20px;top:456.00px;font-size:15.7px;color:#212529;">8</div>
<div class="t" id="r5g" style="left:774.30px;top:456.00px;font-size:15.7px;color:#212529;letter-spacing:-0.248px;">Uncategory</div>
<div class="t" id="r5l" style="left:879.30px;top:456.00px;font-size:15.7px;color:#212529;letter-spacing:-0.703px;word-spacing:0.703px;">Đồ uống</div>
<div class="t" id="r5u" style="left:966.20px;top:456.00px;font-size:15.7px;color:#212529;letter-spacing:-0.516px;">Món</div>
<div class="t" id="r5k" style="left:1062.80px;top:456.00px;font-size:15.7px;color:#212529;letter-spacing:-0.467px;word-spacing:0.467px;">Món chính</div>
<div class="t" id="r5t" style="left:1184.60px;top:456.00px;font-size:15.7px;color:#212529;letter-spacing:-0.438px;word-spacing:0.438px;">Nghệ An</div>
<div class="t" id="r5b" style="left:1283.00px;top:457.01px;font-size:14.65px;color:#337ab7;letter-spacing:-0.741px;word-spacing:0.741px;">Chưa cấu hình</div>
<div class="t" id="r5z" style="left:1425.40px;top:456.00px;font-size:14.65px;color:#337ab7;letter-spacing:-0.721px;word-spacing:0.721px;">Chưa cấu hình</div>
<div class="t" id="r5a" style="left:1800.00px;top:462.01px;font-size:10.47px;color:#28a745;-webkit-text-stroke:0.5px #28a745;letter-spacing:-0.503px;">Active</div>
<svg class="ico" style="left:1384.2px;top:461.3px" width="15" height="4" viewBox="0 0 15 4"><circle cx="2" cy="2" r="1.9" fill="#337ab7"/><circle cx="7.3" cy="2" r="1.9" fill="#337ab7"/><circle cx="12.6" cy="2" r="1.9" fill="#337ab7"/></svg>
<svg class="ico" style="left:1526.4px;top:460.4px" width="15" height="4" viewBox="0 0 15 4"><circle cx="2" cy="2" r="1.9" fill="#337ab7"/><circle cx="7.3" cy="2" r="1.9" fill="#337ab7"/><circle cx="12.6" cy="2" r="1.9" fill="#337ab7"/></svg>
<svg class="ico" style="left:1632px;top:451.3px" width="19" height="22" viewBox="0 0 19 22" fill="none" stroke="#212529" stroke-width="1.25" stroke-linejoin="round"><path d="M7.2 0.8h6.6l4.4 4.4v10.3a1.6 1.6 0 0 1-1.6 1.6h-9.4a1.6 1.6 0 0 1-1.6-1.6v-13.1a1.6 1.6 0 0 1 1.6-1.6z"/><path d="M13.6 0.9v3.2a1.2 1.2 0 0 0 1.2 1.2h3.2"/><path d="M5.5 4.6h-3.1a1.6 1.6 0 0 0-1.6 1.6v13.3a1.6 1.6 0 0 0 1.6 1.6h9.4a1.6 1.6 0 0 0 1.6-1.6v-2.3"/></svg>
<svg class="ico" style="left:1893px;top:455px" width="14" height="17" viewBox="0 0 14 17" fill="none" stroke="#8fb6dc" stroke-width="1"><path d="M0.3 2.8h13.4"/><path d="M4.3 2.6v-1.3a0.8 0.8 0 0 1 0.8-0.8h3.8a0.8 0.8 0 0 1 0.8 0.8v1.3"/><path d="M1.6 3v12.6a0.9 0.9 0 0 0 0.9 0.9h9a0.9 0.9 0 0 0 0.9-0.9v-12.6"/><path d="M4.5 5v9.4M7 5v9.4M9.5 5v9.4"/></svg>
<div class="rl" style="top:497px;width:1646px"></div>
<div class="rl" style="top:541px;width:1646px"></div>
<div class="t" id="total" style="left:1763.10px;top:512.02px;font-size:17.79px;color:#212529;letter-spacing:-0.880px;word-spacing:0.880px;">Tổng: 6 món</div>
<div class="abs" style="left:685px;top:132px;width:82px;height:368px;border:5px solid #ed1c24"></div>
<div class="abs" id="bottombar"></div><div class="abs" id="bottomthumb"></div><div class="abs" style="left:1915px;top:954px;width:1px;height:2px;background:#5a5e62"></div>
</body>
</html>
